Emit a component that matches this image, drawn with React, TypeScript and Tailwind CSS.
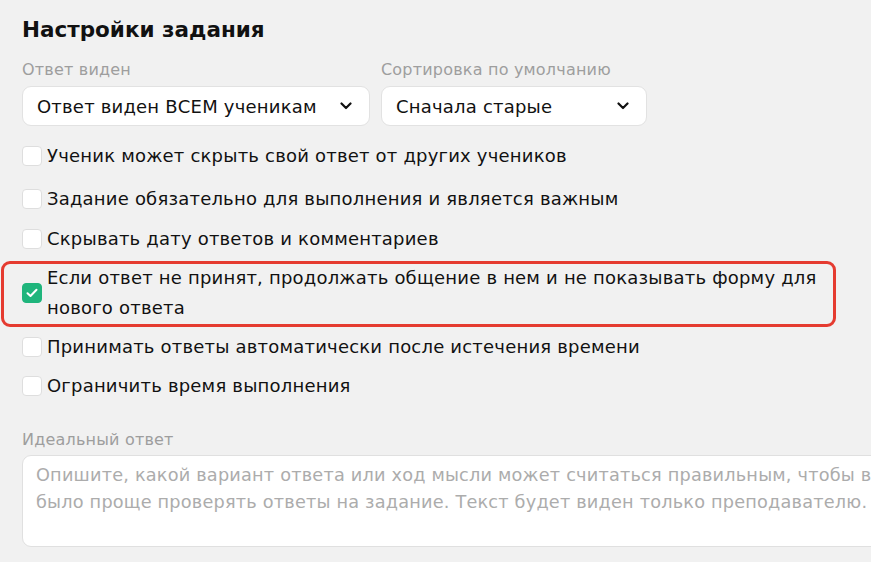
import React, { useState } from 'react';

const Chevron = () => (
    <svg width="12" height="8" viewBox="0 0 12 8" fill="none">
        <path d="M1.5 1.5L6 6L10.5 1.5" stroke="#111" strokeWidth="2.2" strokeLinecap="round" strokeLinejoin="round" />
    </svg>
);

const SelectBox: React.FC<{ label: string; value: string; width: string }> = ({ label, value, width }) => (
    <div className={`flex flex-col ${width}`}>
        <span className="text-[16px] leading-[20px] text-[#9e9e9e]">{label}</span>
        <div className="mt-[6px] h-[40px] flex items-center justify-between pl-[14px] pr-[17px] bg-white border border-[#e2e2e2] rounded-[9px]">
            <span className="text-[18px] text-[#111]">{value}</span>
            <Chevron />
        </div>
    </div>
);

const Checkbox: React.FC<{ checked: boolean; onToggle: () => void }> = ({ checked, onToggle }) => (
    <button
        onClick={onToggle}
        className={`shrink-0 w-[20px] h-[20px] rounded-[4px] flex items-center justify-center border ${
            checked ? 'bg-[#1fb57c] border-[#1fb57c]' : 'bg-white border-[#dedede]'
        }`}
    >
        {checked && (
            <svg width="12" height="10" viewBox="0 0 12 10" fill="none">
                <path d="M1.5 5.2L4.5 8L10.5 1.8" stroke="white" strokeWidth="2" strokeLinecap="round" strokeLinejoin="round" />
            </svg>
        )}
    </button>
);

const options = [
    'Ученик может скрыть свой ответ от других учеников',
    'Задание обязательно для выполнения и является важным',
    'Скрывать дату ответов и комментариев',
    'Если ответ не принят, продолжать общение в нем и не показывать форму для нового ответа',
    'Принимать ответы автоматически после истечения времени',
    'Ограничить время выполнения',
];

export default function App() {
    const [checked, setChecked] = useState<boolean[]>([false, false, false, true, false, false]);

    const toggle = (i: number) => setChecked(prev => prev.map((v, j) => (j === i ? !v : v)));

    return (
        <div className="w-[871px] h-[562px] overflow-hidden bg-[#f1f1f1] text-[#111] font-['DejaVu_Sans',sans-serif] tracking-[0.2px]">
            <div className="pl-[22px] pt-[15px]">
                <h2 className="text-[21.5px] leading-[30px] font-bold tracking-normal">Настройки задания</h2>

                <div className="flex gap-[11px] mt-[15px]">
                    <SelectBox label="Ответ виден" value="Ответ виден ВСЕМ ученикам" width="w-[348px]" />
                    <SelectBox label="Сортировка по умолчанию" value="Сначала старые" width="w-[266px]" />
                </div>

                {/* Checkbox options */}
                <div className="flex flex-col gap-[9px] mt-[15px]">
                    {options.map((text, i) => (
                        <div
                            key={i}
                            className={`relative flex items-center gap-[5px] ${i === 1 ? 'mt-[4px]' : ''} ${i === 2 ? 'mt-[1px]' : ''}`}
                        >
                            <Checkbox checked={checked[i]} onToggle={() => toggle(i)} />
                            <span className="text-[18px] leading-[30px] max-w-[780px]">{text}</span>
                            {i === 3 && (
                                <div className="absolute -left-[21px] -top-[2px] -bottom-[4px] w-[835px] border-[3px] border-[#e53b30] rounded-[9px] pointer-events-none" />
                            )}
                        </div>
                    ))}
                </div>

                {/* Ideal answer */}
                <div className="mt-[29px] flex flex-col">
                    <span className="text-[16px] leading-[20px] text-[#9e9e9e]">Идеальный ответ</span>
                    <textarea
                        className="mt-[5px] w-[920px] h-[92px] resize-none bg-white border border-[#e0e0e0] rounded-[9px] px-[13px] py-[6px] text-[17.7px] leading-[27px] outline-none placeholder:text-[#acacac]"
                        placeholder="Опишите, какой вариант ответа или ход мысли может считаться правильным, чтобы вам было проще проверять ответы на задание. Текст будет виден только преподавателю."
                    />
                </div>
            </div>
        </div>
    );
}
